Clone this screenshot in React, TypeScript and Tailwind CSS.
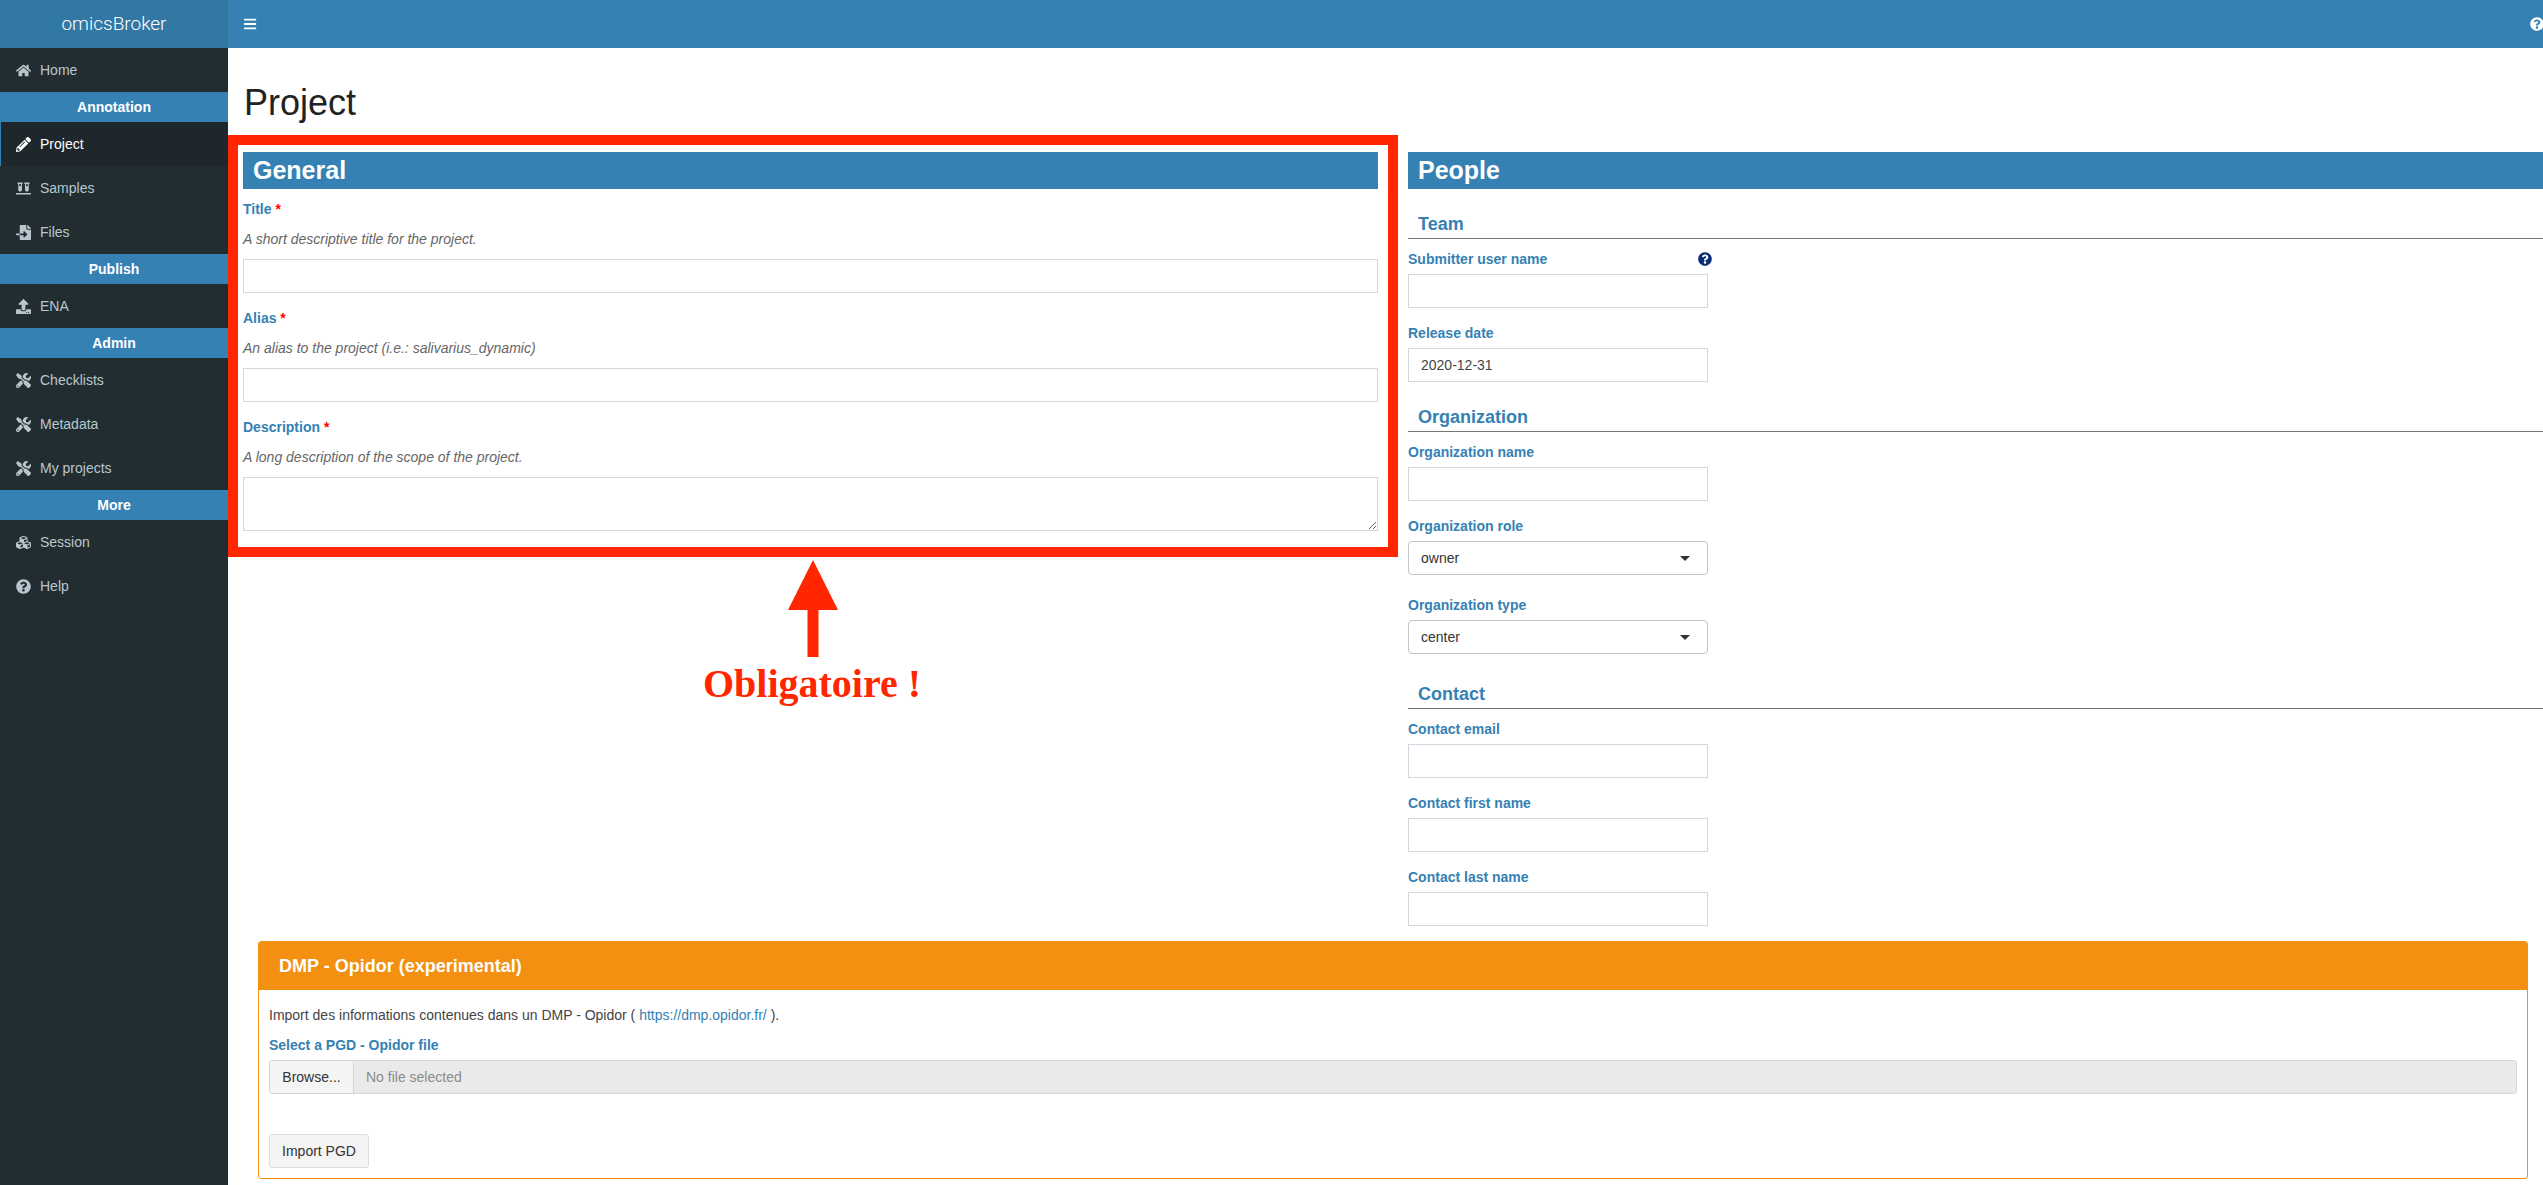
import type { ReactNode } from "react";
import {
  FaBars,
  FaCubes,
  FaFileImport,
  FaHome,
  FaPencilAlt,
  FaQuestionCircle,
  FaTools,
  FaUpload,
  FaVials,
} from "react-icons/fa";
import type { IconType } from "react-icons";

function NavItem({ icon: Icon, label, active }: { icon: IconType; label: string; active?: boolean }) {
  return (
    <div
      className={
        active
          ? "flex h-11 items-center gap-[9px] border-l-[1px] border-[#3581b4] bg-[#1e282c] pl-[15px] text-sm text-white"
          : "flex h-11 items-center gap-[9px] pl-4 text-sm text-[#b8c7ce]"
      }
    >
      <Icon size={15} className="w-[15px] shrink-0" />
      <span>{label}</span>
    </div>
  );
}

function NavHeader({ children }: { children: ReactNode }) {
  return <div className="flex h-[30px] items-center justify-center bg-[#3581b4] text-sm font-bold text-white">{children}</div>;
}

function Sidebar() {
  return (
    <aside className="w-[228px] shrink-0 bg-[#222d32]">
      <div className="flex h-12 items-center justify-center bg-[#3278a4] font-['Roboto',sans-serif] text-[19px] font-light text-white">omicsBroker</div>
      <NavItem icon={FaHome} label="Home" />
      <NavHeader>Annotation</NavHeader>
      <NavItem icon={FaPencilAlt} label="Project" active />
      <NavItem icon={FaVials} label="Samples" />
      <NavItem icon={FaFileImport} label="Files" />
      <NavHeader>Publish</NavHeader>
      <NavItem icon={FaUpload} label="ENA" />
      <NavHeader>Admin</NavHeader>
      <NavItem icon={FaTools} label="Checklists" />
      <NavItem icon={FaTools} label="Metadata" />
      <NavItem icon={FaTools} label="My projects" />
      <NavHeader>More</NavHeader>
      <NavItem icon={FaCubes} label="Session" />
      <NavItem icon={FaQuestionCircle} label="Help" />
    </aside>
  );
}

function SectionBar({ children }: { children: ReactNode }) {
  return <div className="flex h-[37px] items-center bg-[#3581b4] pl-[10px] text-[25px] font-bold text-white">{children}</div>;
}

function SubHeading({ children, className }: { children: ReactNode; className: string }) {
  return <div className={`border-b border-[#777] pb-1 pl-[10px] text-lg/5 font-bold text-[#3581b4] ${className}`}>{children}</div>;
}

function Label({ children, className = "" }: { children: ReactNode; className?: string }) {
  return <div className={`text-sm/5 font-bold text-[#3581b4] ${className}`}>{children}</div>;
}

function Required({ children, className = "" }: { children: ReactNode; className?: string }) {
  return (
    <Label className={className}>
      {children} <span className="text-[#f00]">*</span>
    </Label>
  );
}

function Hint({ children }: { children: ReactNode }) {
  return <div className="mt-[10px] text-sm/5 text-[#666] italic">{children}</div>;
}

function TextField({ className = "", value }: { className?: string; value?: string }) {
  return (
    <input
      readOnly
      defaultValue={value}
      className={`block h-[34px] border border-[#d2d6de] bg-white px-3 text-sm text-[#444] outline-none ${className}`}
    />
  );
}

function SelectField({ value }: { value: string }) {
  return (
    <div className="relative mt-[5px] flex h-[34px] w-[300px] items-center rounded border border-[#c4c4c4] bg-white px-3 text-sm text-[#333]">
      {value}
      <span className="absolute top-[14px] right-[17px] h-0 w-0 border-x-[5px] border-t-[5px] border-x-transparent border-t-[#333]" />
    </div>
  );
}

function GeneralForm() {
  return (
    <div className="w-[1170px] shrink-0">
      <div className="border-[10px] border-[#ff2600] pt-[7px] pr-[10px] pb-4 pl-[5px]">
        <SectionBar>General</SectionBar>
        <Required className="mt-[10px]">Title</Required>
        <Hint>A short descriptive title for the project.</Hint>
        <TextField className="mt-[10px] w-full" />
        <Required className="mt-[15px]">Alias</Required>
        <Hint>An alias to the project (i.e.: salivarius_dynamic)</Hint>
        <TextField className="mt-[10px] w-full" />
        <Required className="mt-[15px]">Description</Required>
        <Hint>A long description of the scope of the project.</Hint>
        <textarea readOnly className="mt-[10px] block h-[54px] w-full border border-[#d2d6de] bg-white outline-none" />
      </div>

      {/* Annotation arrow */}
      <div className="mt-[3px] flex flex-col items-center">
        <svg width="50" height="97" viewBox="0 0 50 97" className="ml-[-1px]">
          <path d="M25 0 L50 50 H30.5 V97 H19.5 V50 H0 Z" fill="#ff2600" />
        </svg>
        <div className="mt-[2px] ml-[-2px] font-['Liberation_Serif',serif] text-[40px]/[50px] font-bold text-[#ff2600]">Obligatoire !</div>
      </div>
    </div>
  );
}

function PeopleForm() {
  return (
    <div className="ml-[10px] min-w-0 flex-1 pt-[17px]">
      <SectionBar>People</SectionBar>
      <SubHeading className="mt-[25px]">Team</SubHeading>
      <div className="mt-[10px] flex w-[304px] items-center justify-between">
        <Label>Submitter user name</Label>
        <FaQuestionCircle size={14} className="text-[#0b2a78]" />
      </div>
      <TextField className="mt-[5px] w-[300px]" />
      <Label className="mt-[15px]">Release date</Label>
      <TextField className="mt-[5px] w-[300px]" value="2020-12-31" />

      <SubHeading className="mt-[25px]">Organization</SubHeading>
      <Label className="mt-[10px]">Organization name</Label>
      <TextField className="mt-[5px] w-[300px]" />
      <Label className="mt-[15px]">Organization role</Label>
      <SelectField value="owner" />
      <Label className="mt-5">Organization type</Label>
      <SelectField value="center" />

      <SubHeading className="mt-[30px]">Contact</SubHeading>
      <Label className="mt-[10px]">Contact email</Label>
      <TextField className="mt-[5px] w-[300px]" />
      <Label className="mt-[15px]">Contact first name</Label>
      <TextField className="mt-[5px] w-[300px]" />
      <Label className="mt-[15px]">Contact last name</Label>
      <TextField className="mt-[5px] w-[300px]" />
    </div>
  );
}

function OpidorPanel() {
  return (
    <div className="mt-[15px] mr-[15px] ml-[30px] overflow-hidden rounded-[3px] border border-[#f39012]">
      <div className="flex h-12 items-center bg-[#f39012] pl-5 text-lg font-bold text-white">DMP - Opidor (experimental)</div>
      <div className="px-[10px] pt-[15px] pb-[10px] text-sm/5">
        <div className="text-[#444]">
          Import des informations contenues dans un DMP - Opidor ( <span className="text-[#3581b4]">https://dmp.opidor.fr/</span> ).
        </div>
        <Label className="mt-[10px]">Select a PGD - Opidor file</Label>
        <div className="mt-[5px] flex h-[34px] overflow-hidden rounded-[3px] border border-[#d2d6de] bg-[#eaeaea]">
          <div className="flex w-[84px] items-center justify-center border-r border-[#d2d6de] bg-[#f4f4f4] text-[#333]">Browse...</div>
          <div className="flex items-center pl-3 text-[#8a8a8a]">No file selected</div>
        </div>
        <button className="mt-10 block h-[34px] w-[100px] rounded-[3px] border border-[#ddd] bg-[#f4f4f4] text-[#333]">Import PGD</button>
      </div>
    </div>
  );
}

export default function App() {
  return (
    <div className="flex h-[1185px] overflow-hidden bg-white font-['Liberation_Sans',sans-serif]">
      <Sidebar />
      <main className="min-w-0 flex-1">
        <div className="flex h-12 items-center justify-between bg-[#3581b4] pl-[15px] text-white">
          <FaBars size={14} />
          <FaQuestionCircle size={14} className="mr-[-1px]" />
        </div>
        <div className="h-[87px] pt-[35px] pl-4">
          <h1 className="text-4xl/10 font-normal text-[#222]">Project</h1>
        </div>
        <div className="flex">
          <GeneralForm />
          <PeopleForm />
        </div>
        <OpidorPanel />
      </main>
    </div>
  );
}
